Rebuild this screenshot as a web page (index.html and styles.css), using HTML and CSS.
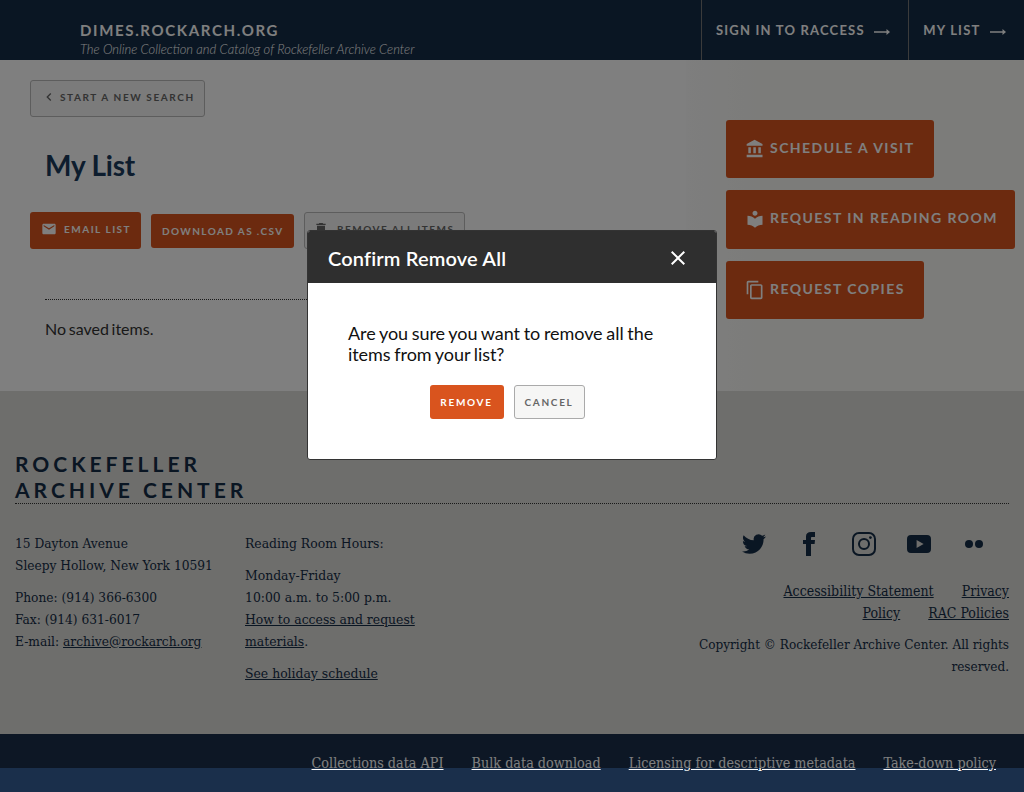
FILE: index.html
```html
<!DOCTYPE html>
<html lang="en">
<head>
<meta charset="utf-8">
<title>My List</title>
<link rel="stylesheet" href="styles.css">
</head>
<body>
<header class="site-header">
  <div class="brand">
    <div class="brand-name">DIMES.ROCKARCH.ORG</div>
    <div class="brand-tag">The Online Collection and Catalog of Rockefeller Archive Center</div>
  </div>
  <nav class="top-nav">
    <a class="nav-item">SIGN IN TO RACCESS<svg class="arrow" viewBox="0 0 16 8"><path d="M0 3.200h12.500V1L16 4l-3.500 3V4.800H0z"/></svg></a>
    <a class="nav-item">MY LIST<svg class="arrow" viewBox="0 0 16 8"><path d="M0 3.200h12.500V1L16 4l-3.500 3V4.800H0z"/></svg></a>
  </nav>
</header>

<main class="main">
  <section class="content">
    <a class="btn btn-outline btn-back"><svg class="ico-back" viewBox="0 0 24 24"><path d="M15.410 7.410L14 6l-6 6 6 6 1.410-1.410L10.830 12z"/></svg>START A NEW SEARCH</a>
    <h1 class="title">My List</h1>
    <div class="actions">
      <a class="btn btn-orange btn-email"><svg class="ico-email" viewBox="0 0 24 24"><path d="M20 4H4c-1.100 0-1.990.9-1.990 2L2 18c0 1.100.9 2 2 2h16c1.100 0 2-.9 2-2V6c0-1.100-.9-2-2-2zm0 4l-8 5-8-5V6l8 5 8-5v2z"/></svg>EMAIL LIST</a>
      <a class="btn btn-orange btn-csv">DOWNLOAD AS .CSV</a>
      <a class="btn btn-outline btn-remove"><svg class="ico-trash" viewBox="0 0 24 24"><path d="M6 19c0 1.100.9 2 2 2h8c1.100 0 2-.9 2-2V7H6v12zM19 4h-3.500l-1-1h-5l-1 1H5v2h14V4z"/></svg>REMOVE ALL ITEMS</a>
    </div>
    <div class="list">
      <p class="empty">No saved items.</p>
    </div>
  </section>
  <aside class="side">
    <a class="side-btn side-visit"><svg class="ico-side" viewBox="0 0 24 24"><path d="M4 10v7h3v-7H4zm6 0v7h3v-7h-3zM2 22h19v-3H2v3zm14-12v7h3v-7h-3zm-4.500-9L2 6v2h19V6l-9.500-5z"/></svg>SCHEDULE A VISIT</a>
    <a class="side-btn side-read"><svg class="ico-side" viewBox="0 0 24 24"><path d="M12 11.550C9.640 9.350 6.480 8 3 8v11c3.480 0 6.640 1.350 9 3.550 2.360-2.190 5.520-3.550 9-3.550V8c-3.480 0-6.640 1.350-9 3.550zM12 8c1.660 0 3-1.340 3-3s-1.340-3-3-3-3 1.340-3 3 1.340 3 3 3z"/></svg>REQUEST IN READING ROOM</a>
    <a class="side-btn side-copy"><svg class="ico-side" viewBox="0 0 24 24"><path d="M16 1H4c-1.100 0-2 .9-2 2v14h2V3h12V1zm3 4H8c-1.100 0-2 .9-2 2v14c0 1.100.9 2 2 2h11c1.100 0 2-.9 2-2V7c0-1.100-.9-2-2-2zm0 16H8V7h11v14z"/></svg>REQUEST COPIES</a>
  </aside>
</main>

<footer class="footer">
  <h2 class="org">ROCKEFELLER<br>ARCHIVE CENTER</h2>
  <div class="foot-cols">
    <div class="col-addr">
      <p>15 Dayton Avenue<br>Sleepy Hollow, New York 10591</p>
      <p>Phone: (914) 366-6300<br>Fax: (914) 631-6017<br>E-mail: <a>archive@rockarch.org</a></p>
    </div>
    <div class="col-hours">
      <p>Reading Room Hours:</p>
      <p>Monday-Friday<br>10:00 a.m. to 5:00 p.m.<br><a>How to access and request materials</a>.</p>
      <p><a>See holiday schedule</a></p>
    </div>
    <div class="col-right">
      <div class="social">
        <svg viewBox="0 0 24 24"><path d="M23.953 4.570a10 10 0 01-2.825.775 4.958 4.958 0 002.163-2.723c-.951.555-2.005.959-3.127 1.184a4.920 4.920 0 00-8.384 4.482C7.690 8.095 4.067 6.130 1.640 3.162a4.822 4.822 0 00-.666 2.475c0 1.710.870 3.213 2.188 4.096a4.904 4.904 0 01-2.228-.616v.060a4.923 4.923 0 003.946 4.827 4.996 4.996 0 01-2.212.085 4.936 4.936 0 004.604 3.417 9.867 9.867 0 01-6.102 2.105c-.390 0-.779-.023-1.170-.067a13.995 13.995 0 007.557 2.209c9.053 0 13.998-7.496 13.998-13.985 0-.210 0-.420-.015-.630A9.935 9.935 0 0024 4.590z"/></svg>
        <svg viewBox="0 0 24 24"><path d="M9 8H6v4h3v12h5V12h3.600l.4-4h-4V6.300c0-1 .2-1.300 1.100-1.300H18V0h-3.800C10.600 0 9 1.600 9 4.600z"/></svg>
        <svg viewBox="0 0 24 24"><path class="ig" d="M7 1h10a6 6 0 0 1 6 6v10a6 6 0 0 1-6 6H7a6 6 0 0 1-6-6V7a6 6 0 0 1 6-6zM12 7a5 5 0 1 0 0 10a5 5 0 1 0 0-10z"/><circle cx="18.400" cy="5.600" r="1.400"/></svg>
        <svg viewBox="0 0 24 24"><path d="M4 3h16a4 4 0 0 1 4 4v10a4 4 0 0 1-4 4H4a4 4 0 0 1-4-4V7a4 4 0 0 1 4-4zm5.600 5v8l7-4z" fill-rule="evenodd"/></svg>
        <svg viewBox="0 0 24 24"><circle cx="7" cy="12" r="4"/><circle cx="17" cy="12" r="4"/></svg>
      </div>
      <p class="legal"><a>Accessibility Statement</a> <a>Privacy Policy</a> <a>RAC Policies</a></p>
      <p class="copy">Copyright © Rockefeller Archive Center. All rights reserved.</p>
    </div>
  </div>
</footer>
<div class="foot-bar">
  <a>Collections data API</a><a>Bulk data download</a><a>Licensing for descriptive metadata</a><a>Take-down policy</a>
</div>

<div class="overlay"></div>
<div class="modal">
  <div class="modal-head">
    <span class="modal-title">Confirm Remove All</span>
    <svg class="ico-close" viewBox="0 0 24 24"><path d="M19 6.410L17.590 5 12 10.590 6.410 5 5 6.410 10.590 12 5 17.590 6.410 19 12 13.410 17.590 19 19 17.590 13.410 12z"/></svg>
  </div>
  <div class="modal-body">
    <p class="modal-text">Are you sure you want to remove all the items from your list?</p>
    <div class="modal-actions">
      <a class="mbtn mbtn-remove">REMOVE</a>
      <a class="mbtn mbtn-cancel">CANCEL</a>
    </div>
  </div>
</div>
</body>
</html>
```

FILE: styles.css
```css
* { box-sizing: border-box; }
html, body { margin: 0; padding: 0; height: 792px; overflow: hidden; }
body { font-family: "Lato", "Liberation Sans", sans-serif; color: #222; background: #fff; position: relative; }
p { margin: 0; }
svg { fill: currentColor; display: block; flex: none; }

.site-header { height: 60px; background: #142c46; display: flex; justify-content: space-between; color: #fff; }
.brand { padding: 20px 0 0 80px; }
.brand-name { font-size: 15px; font-weight: 700; letter-spacing: 1.650px; line-height: 20px; }
.brand-tag { font-size: 13px; font-style: italic; font-weight: 300; line-height: 18px; }
.top-nav { display: flex; }
.nav-item { display: flex; align-items: center; padding: 0 18px 0 14px; border-left: 1px solid #777; font-size: 13px; font-weight: 700; letter-spacing: 1.200px; white-space: nowrap; }
.arrow { width: 16px; height: 8px; margin-left: 9.500px; margin-top: 3px; }

.main { height: 331px; display: flex; background: #fff; }
.content { width: 686px; padding: 20px 15px 0 30px; }
.side { flex: 1; padding: 60px 9px 0 40px; display: flex; flex-direction: column; align-items: flex-start; background: linear-gradient(90deg, #fcfcfc 0, #f8f8f4 80px); }

.btn { display: inline-flex; align-items: center; font-size: 10px; font-weight: 700; letter-spacing: 1.500px; border-radius: 3px; white-space: nowrap; }
.btn-outline { border: 1px solid #bbb; background: #f6f6f6; color: #666; }
.btn-orange { background: #d9541e; color: #fff; }
.btn-back { height: 37px; width: 175px; padding: 0 0 4px 10px; letter-spacing: 1.600px; }
.ico-back { width: 16px; height: 16px; margin-right: 3px; }
.title { margin: 0; padding: 28px 0 0 15px; font-size: 28px; font-weight: 700; color: #1a3a5c; line-height: 40px; letter-spacing: -.2px; height: 95px; }
.actions { display: flex; align-items: flex-start; gap: 10px; }
.btn-email { height: 37px; width: 111px; padding: 0 0 3px 11px; }
.ico-email { width: 16px; height: 16px; margin-right: 7px; }
.btn-csv { height: 34px; width: 143px; margin-top: 2px; padding-left: 11px; letter-spacing: 1.400px; }
.btn-remove { height: 37px; width: 161px; padding: 0 0 3px 8px; }
.ico-trash { width: 16px; height: 16px; margin-right: 8px; }
.list { margin: 50px 0 0 15px; border-top: 1px dotted #333; padding-top: 19px; }
.empty { font-size: 16px; line-height: 20px; color: #333; word-spacing: -1.400px; }

.side-btn { display: flex; align-items: center; background: #d9541e; color: #fff; font-size: 14px; font-weight: 700; letter-spacing: 1.450px; border-radius: 3px; padding: 0 0 3px 19px; margin-bottom: 12px; white-space: nowrap; }
.side-visit { width: 208px; height: 58px; }
.side-read { width: 289px; height: 59px; padding-bottom: 5px; }
.side-copy { width: 198px; height: 58px; }
.ico-side { width: 20px; height: 20px; margin: 3px 5px 0 0; }

.footer { height: 343px; background: #dddcd8; padding: 60px 15px 0; color: #142c46; font-family: "DejaVu Serif", "Liberation Serif", serif; font-stretch: condensed; font-size: 13.800px; line-height: 22px; }
.org { margin: 0; font-family: "Lato", sans-serif; font-stretch: normal; font-size: 21px; font-weight: 700; line-height: 26px; letter-spacing: 4px; border-bottom: 1px dotted #333; height: 53px; }
.foot-cols { display: flex; padding-top: 28px; }
.foot-cols p + p { margin-top: 10px; }
.foot-cols a { text-decoration: underline; }
.col-addr { width: 230px; flex: none; font-size: 13.600px; }
.col-hours { width: 175px; flex: none; }
.col-right { width: 322px; margin-left: auto; text-align: right; }
.social { display: flex; gap: 31px; justify-content: flex-end; padding-right: 23px; height: 24px; margin-bottom: 24px; }
.social svg { width: 24px; height: 24px; fill: #142c46; }
.social .ig { fill-rule: evenodd; fill: none; stroke: #142c46; stroke-width: 2; }
.legal { width: 260px; margin-left: auto; font-size: 14px; }
.legal a { margin-left: 24px; }
.copy { font-size: 13.450px; }

.foot-bar { height: 58px; background: #1a2f4b; display: flex; justify-content: flex-end; gap: 28px; padding: 18px 28px 0 0; color: #fff; font-family: "DejaVu Serif", "Liberation Serif", serif; font-stretch: condensed; font-size: 14.250px; line-height: 22px; }
.foot-bar a { text-decoration: underline; }

.overlay { position: absolute; top: 0; left: 0; right: 0; height: 768px; background: rgba(0, 0, 0, .5); }
.modal { position: absolute; top: 230px; left: 307px; width: 410px; height: 230px; background: #fff; border: 1px solid #333; border-radius: 3px; overflow: hidden; }
.modal-head { height: 52px; background: #2f2f2f; color: #fff; display: flex; align-items: center; justify-content: space-between; padding: 2px 26px 0 20px; }
.modal-title { font-size: 20px; font-weight: 600; letter-spacing: .150px; }
.ico-close { width: 24px; height: 24px; }
.modal-body { padding: 40px 40px 0; }
.modal-text { font-size: 18px; line-height: 21px; color: #111; word-spacing: -.800px; letter-spacing: -.060px; }
.modal-actions { display: flex; justify-content: center; gap: 10px; margin-top: 20px; padding-right: 10px; }
.mbtn { display: flex; align-items: center; justify-content: center; height: 34px; font-size: 10px; font-weight: 700; letter-spacing: 1.700px; border-radius: 3px; }
.mbtn-remove { width: 74px; background: #d9541e; color: #fff; }
.mbtn-cancel { width: 71px; background: #f6f6f5; color: #666; border: 1px solid #aaa; }
```
